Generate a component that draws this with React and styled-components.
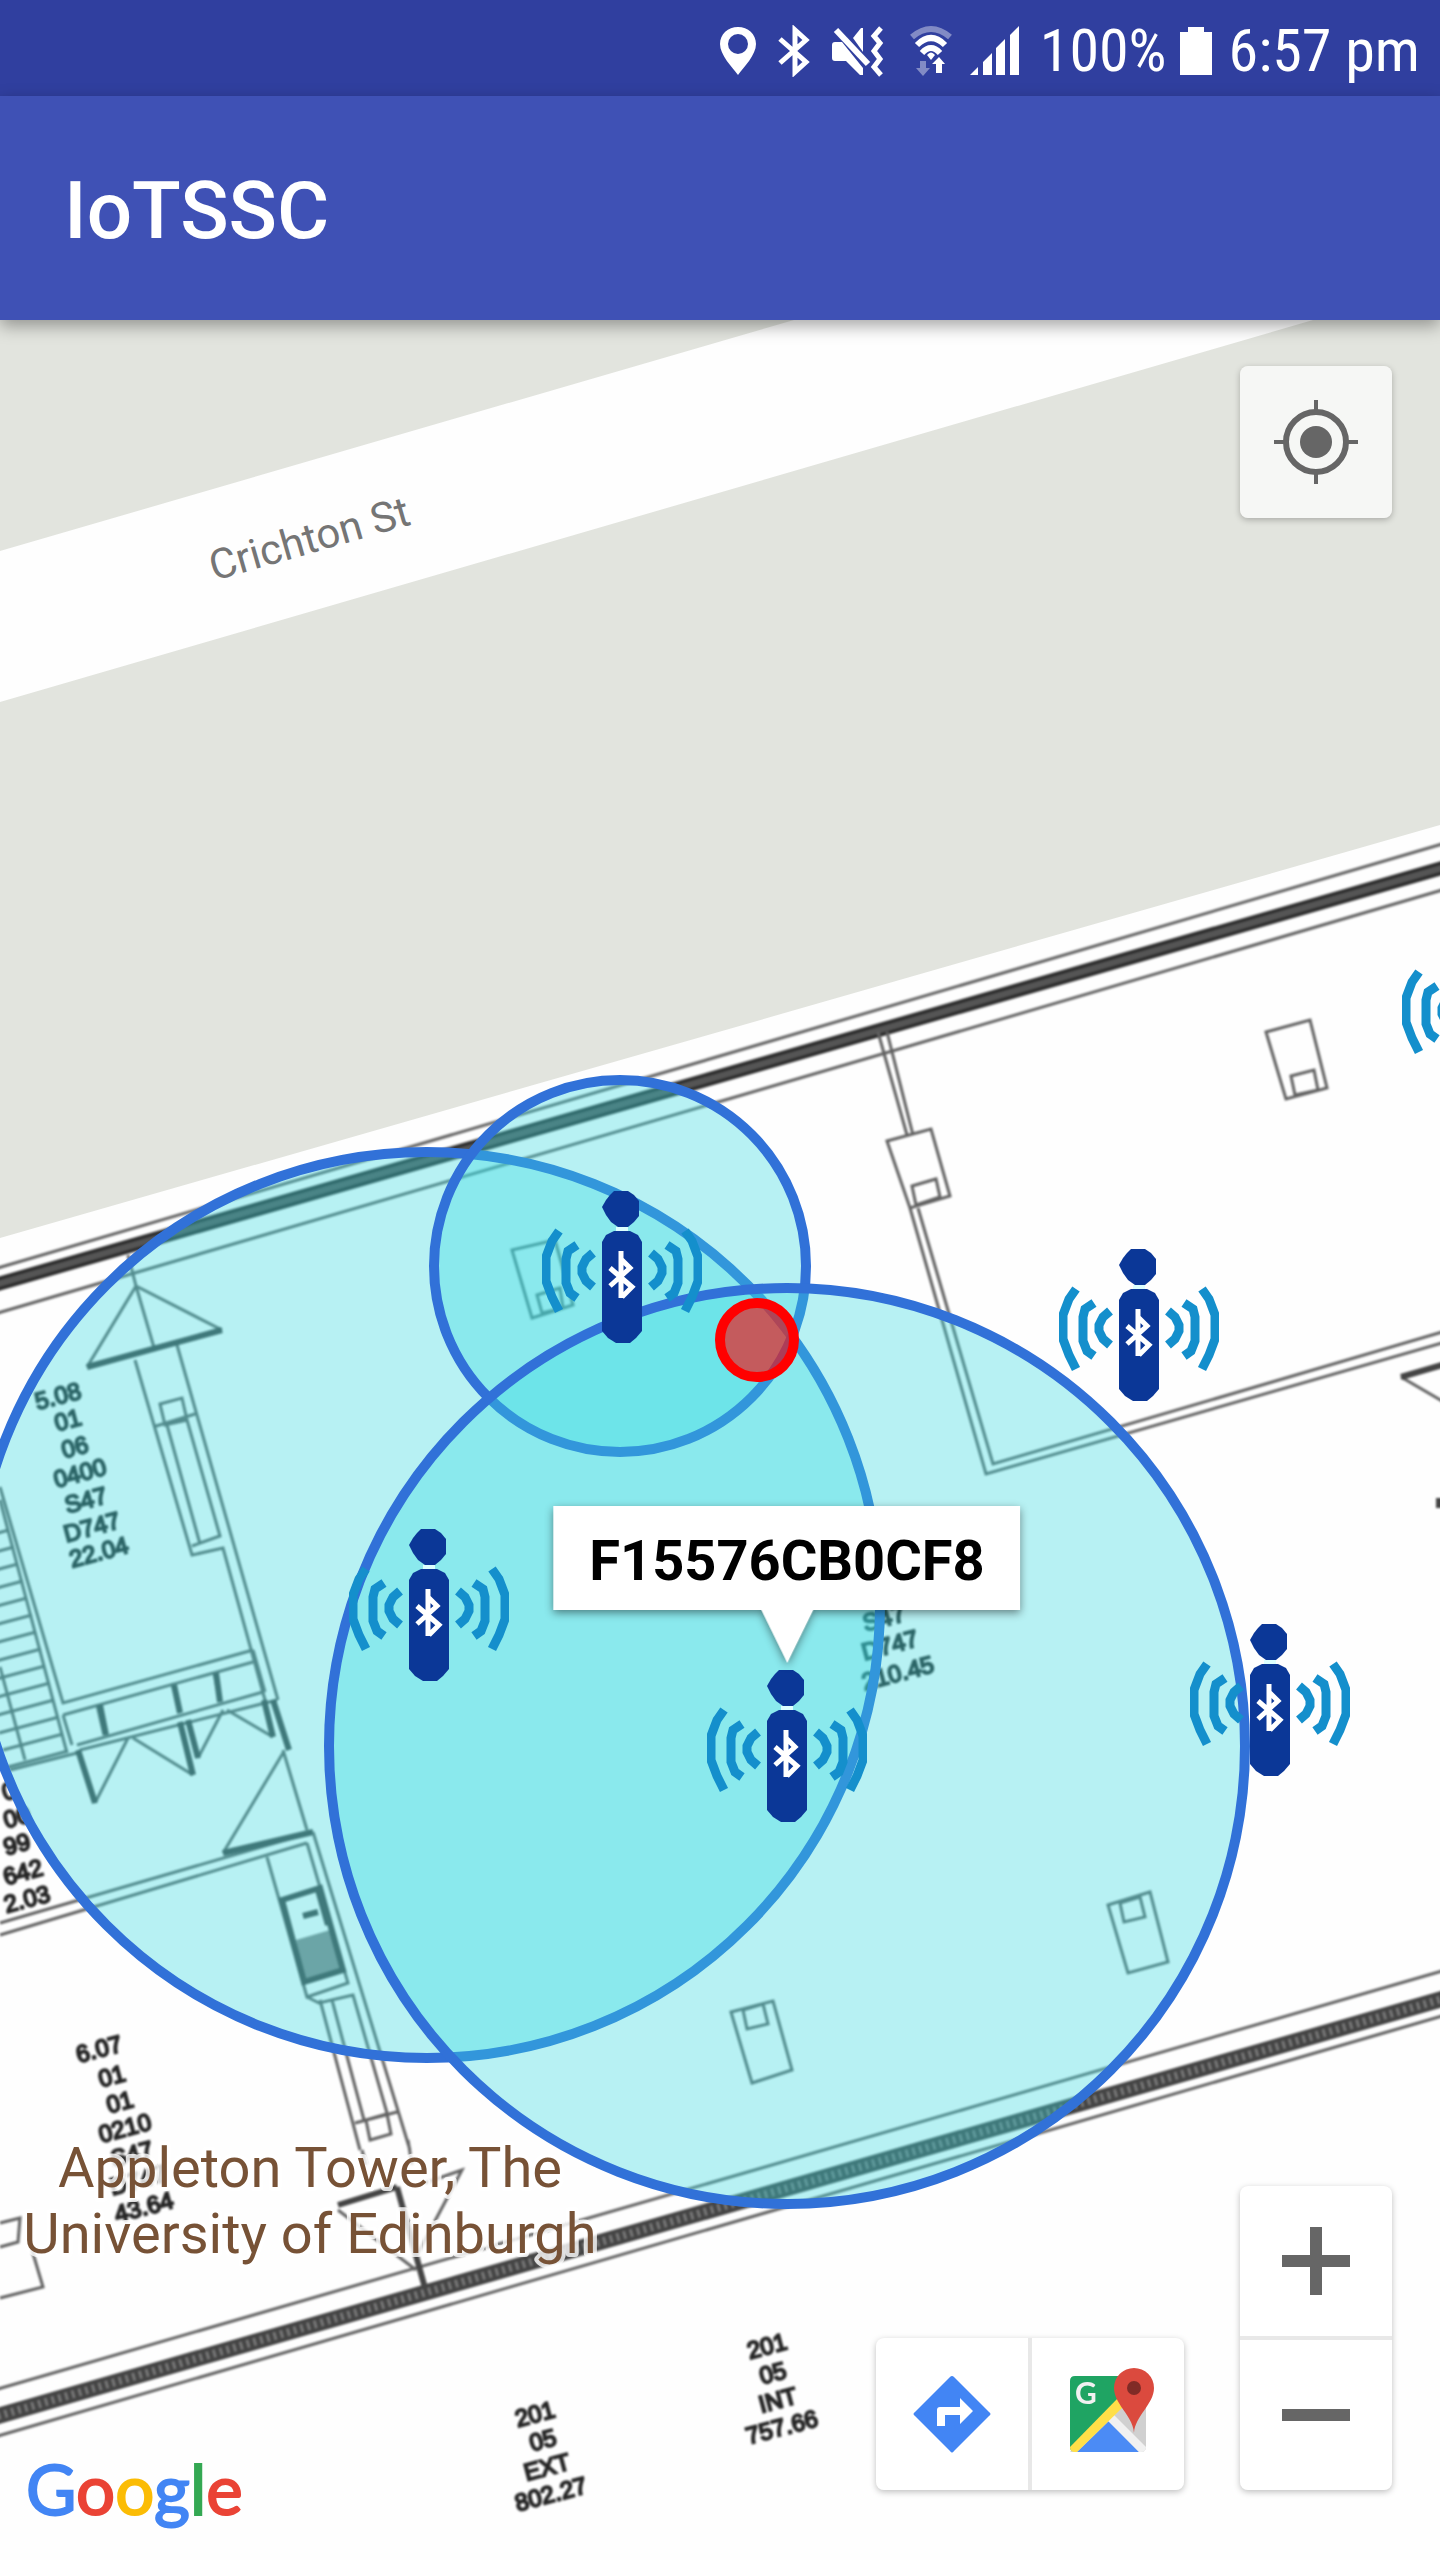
import React from 'react';
import styled, { createGlobalStyle } from 'styled-components';

const GlobalStyle = createGlobalStyle`
  *, *::before, *::after { box-sizing: border-box; }
  body { margin: 0; background: #fefefe; font-family: Roboto, sans-serif; }
  button { border: 0; padding: 0; margin: 0; background: none; font: inherit; cursor: pointer; }
`;

const Screen = styled.div`
  display: flex;
  flex-direction: column;
  min-height: 100vh;
`;

const StatusBar = styled.div`
  display: flex;
  align-items: center;
  justify-content: flex-end;
  height: 96px;
  padding: 6px 20px 0 0;
  background: #303f9f;
  color: #fff;
`;

const StatusIcons = styled.div`
  display: flex;
  align-items: center;
  gap: 22px;
  margin-right: 20px;
`;

const StatusIcon = styled.svg`
  display: block;
  width: ${(p) => p.$w}px;
  height: 52px;
  fill: #fff;
`;

const StatusText = styled.span`
  font: 400 60px/72px 'Roboto Condensed', Roboto, sans-serif;
  white-space: nowrap;
`;

const Battery = styled(StatusIcon)`
  margin: 0 17px 0 13px;
`;

const AppBar = styled.header`
  position: relative;
  z-index: 2;
  display: flex;
  align-items: center;
  height: 224px;
  padding: 6px 64px 0;
  background: #3f51b5;
  box-shadow: 0 6px 16px rgba(0, 0, 0, 0.35);
`;

const Title = styled.h1`
  margin: 0;
  color: #fff;
  font: 500 80px/96px Roboto, sans-serif;
`;

const MapArea = styled.main`
  position: relative;
  flex: 1;
  min-height: 1200px;
  overflow: hidden;
  background: #fefefe;
`;

const Plan = styled.svg`
  position: absolute;
  top: 0;
  left: 0;
  width: 1440px;
  height: 2240px;

  .thin { fill: none; stroke: #626262; stroke-width: 3; }
  .thick { fill: none; stroke: #444; stroke-width: 6; }
`;

const Overlay = styled.g`
  filter: blur(1px);
`;

const PlanText = styled.text`
  font: 400 24px 'Liberation Sans', sans-serif;
  fill: #262626;
  stroke: #262626;
  stroke-width: 2;
  text-anchor: middle;
`;

const StreetText = styled.text`
  font: 400 42px Roboto, sans-serif;
  fill: #757575;
`;

const PlaceText = styled.text`
  font: 400 56px Roboto, sans-serif;
  fill: #775236;
  stroke: #fff;
  stroke-opacity: 0.8;
  stroke-width: 8;
  stroke-linejoin: round;
  paint-order: stroke;
  text-anchor: middle;
`;

const Beacon = styled.button`
  position: absolute;
  left: ${(p) => p.$x}px;
  top: ${(p) => p.$y}px;
  width: 160px;
  height: 152px;

  svg { display: block; width: 160px; height: 152px; }
`;

const InfoWindow = styled.div`
  position: absolute;
  left: 787px;
  top: 1186px;
  display: flex;
  align-items: center;
  height: 104px;
  padding: 6px 36px 0;
  transform: translateX(-50%);
  background: #fff;
  color: #000;
  font: 700 56px/64px Roboto, sans-serif;
  filter: drop-shadow(0 3px 4px rgba(0, 0, 0, 0.45));

  &::after {
    content: '';
    position: absolute;
    top: 100%;
    left: 50%;
    margin-left: -26px;
    border: 26px solid transparent;
    border-top: 53px solid #fff;
    border-bottom: 0;
  }
`;

const TopControls = styled.div`
  position: absolute;
  top: 46px;
  right: 48px;
`;

const BottomControls = styled.div`
  position: absolute;
  right: 48px;
  bottom: 70px;
  display: flex;
  align-items: flex-end;
  gap: 56px;
`;

const ButtonGroup = styled.div`
  display: flex;
  flex-direction: ${(p) => (p.$vertical ? 'column' : 'row')};
  gap: 4px;
  border-radius: 8px;
  background: ${(p) => (p.$glass ? 'rgba(255, 255, 255, 0.7)' : '#e8e8e8')};
  box-shadow: 0 2px 6px rgba(0, 0, 0, 0.25);
  overflow: hidden;
`;

const MapButton = styled.button`
  display: flex;
  align-items: center;
  justify-content: center;
  width: 152px;
  height: ${(p) => p.$h || 152}px;
  background: ${(p) => (p.$glass ? 'transparent' : '#fff')};

  svg { display: block; width: 96px; height: 96px; }
`;

const Logo = styled.a`
  position: absolute;
  left: 26px;
  bottom: 27px;
  font: 400 69px/88px Lato, sans-serif;
  text-decoration: none;
`;

const LogoLetter = styled.span`
  color: ${(p) => p.$color};
  -webkit-text-stroke: 2px ${(p) => p.$color};
`;

const LOGO = [
  ['G', '#4285f4'],
  ['o', '#ea4335'],
  ['o', '#fbbc05'],
  ['g', '#4285f4'],
  ['l', '#34a853'],
  ['e', '#ea4335'],
];

const BEACONS = [
  { id: 'F15576CB0CF1', x: 542, y: 871 },
  { id: 'F15576CB0CF2', x: 349, y: 1209 },
  { id: 'F15576CB0CF8', x: 707, y: 1350 },
  { id: 'F15576CB0CF3', x: 1059, y: 929 },
  { id: 'F15576CB0CF4', x: 1190, y: 1304 },
  { id: 'F15576CB0CF5', x: 1402, y: 612 },
];

const ROOM_LABELS = [
  [60, 1404, '5.08'], [70, 1428, '01'], [77, 1455, '06'], [82, 1481, '0400'],
  [88, 1508, 'S47'], [94, 1535, 'D747'], [101, 1560, '22.04'],
  [101, 2057, '6.07'], [114, 2084, '01'], [122, 2110, '01'], [127, 2136, '0210'],
  [134, 2162, 'S47'], [140, 2188, 'D747'], [146, 2215, '43.64'],
  [537, 2422, '201'], [545, 2448, '05'], [549, 2475, 'EXT'], [553, 2502, '802.27'],
  [769, 2354, '201'], [775, 2381, '05'], [780, 2408, 'INT'], [784, 2435, '757.66'],
  [886, 1626, 'S47'], [892, 1653, 'D747'], [900, 1681, '210.45'],
  [11, 1799, '0'], [19, 1825, '00'], [19, 1852, '99'], [25, 1880, '642'], [29, 1907, '2.03'],
];

const STAIRS = Array.from({ length: 14 }, (_, i) => {
  const y = 1530 + i * 17;
  const x = Math.round((y - 1496) * 0.265);
  return `M${x} ${y}L${x - 60} ${y + 16}`;
}).join('');

function Waves() {
  return (
    <g fill="none" stroke="#148fcc" strokeWidth="9">
      <path d="M17 40L10 50L4 66V90L10 106L17 120" />
      <path d="M35 54L26 60L24 68V92L28 102L35 107" />
      <path d="M51 62L44 68L40 76V82L44 90L51 96" />
    </g>
  );
}

function BeaconIcon() {
  return (
    <svg viewBox="0 0 160 152" aria-hidden="true">
      <Waves />
      <g transform="translate(160 0) scale(-1 1)"><Waves /></g>
      <path d="M72 0H86L92 4L97 10V25L92 31L86 36H76L69 31L64 24L60 16L64 9L68 4Z" fill="#0b3797" />
      <path d="M74 36H86V40H74Z" fill="#dff" />
      <path d="M72 40H88L96 44L100 51V140L94 147L88 152H74L66 147L60 140V51L64 44Z" fill="#0b3797" />
      <path d="M79 60V107M68 77L90 96L80 106M68 95L88 77L79 68" fill="none" stroke="#fff" strokeWidth="5" />
    </svg>
  );
}

function FloorPlan() {
  return (
    <Plan viewBox="0 320 1440 2240" aria-label="Floor plan">
      <path d="M0 320H794L0 551Z" fill="#e2e4de" />
      <path d="M0 702L1313 320H1440V825L0 1238Z" fill="#e2e4de" />

      <Overlay>
        <g className="thin">
          <path d="M-9 1270L1449 842M-9 1315L1449 888" />
          <path d="M-9 2391L1449 1969M-9 2438L1449 2014" />
        </g>
        <path d="M-9 1286L1449 866" stroke="#555" strokeWidth="14" />
        <path d="M-9 1281L1449 861M-9 1291L1449 871" stroke="#2c2c2c" strokeWidth="3" />
        <path d="M-9 2418L1449 1997" stroke="#444" strokeWidth="16" />
        <path d="M-9 2418L1449 1997" stroke="#777" strokeWidth="8" strokeDasharray="3 4" />

        <path
          className="thin"
          d="M128 1255L136 1286L87 1367M136 1286L222 1330M136 1286L155 1351M135 1360L192 1555L223 1548L265 1700M177 1345L278 1700
            M153 1427L195 1414M160 1404L182 1398L187 1420L165 1425ZM167 1425L200 1544M187 1420L220 1536L192 1546"
        />
        <path className="thick" d="M87 1367L222 1330" />
        <path
          className="thin"
          d="M0 1487L63 1703L253 1650M0 1500L67 1753M63 1715L253 1662M63 1715L72 1745M77 1745L263 1692M80 1750L277 1700M0 1667L25 1760M10 1770L77 1753"
        />
        <path className="thin" d={STAIRS} />
        <path
          className="thin"
          d="M97 1705L104 1735M172 1683L180 1713M214 1673L220 1702M253 1650L265 1692M95 1803L128 1738M133 1738L193 1775M198 1758L223 1710M227 1710L273 1737
            M283 1750L307 1830M283 1753L223 1853M0 1923L313 1832M0 1935L307 1843"
        />
        <path className="thick" d="M78 1750L95 1803M180 1722L193 1775M188 1720L198 1758M264 1700L273 1737M273 1700L289 1750M100 1705L106 1735M174 1685L180 1713M216 1673L220 1702M223 1853L313 1832" />
        <path
          className="thin"
          d="M313 1832L410 2150M307 1843L348 1983L307 1997L267 1857M307 1997L319 2003L353 1995L387 2113M320 2000L360 2150M332 2000L364 2120M355 2123L397 2112
            M366 2120L387 2114L391 2134L370 2140ZM362 2150L366 2165M408 2140L412 2165"
        />
        <path d="M296 1940L330 1930L342 1970L304 1982Z" fill="#888" />
        <path className="thick" d="M282 1900L320 1888L343 1970L304 1982ZM318 1890L328 1925M303 1916L318 1912" />
        <path className="thick" d="M338 2205L397 2187M397 2187L425 2288" strokeWidth="5" />
        <path className="thin" d="M425 2183L462 2170L418 2253M338 2210L416 2270M0 2223L20 2218L18 2242L0 2247M32 2250L43 2287L0 2298" />

        <path
          className="thin"
          d="M878 1032L907 1135M887 1032L913 1135M887 1141L931 1129L950 1196L910 1208ZM912 1186L936 1179L940 1197L916 1205Z
            M910 1208L986 1474L1449 1341M918 1208L993 1464L1449 1330
            M1266 1032L1310 1020L1327 1088L1286 1099ZM1291 1076L1314 1070L1318 1090L1295 1095Z
            M1401 1377L1449 1405
            M1108 1905L1150 1892L1168 1962L1128 1973ZM1120 1903L1140 1897L1145 1917L1124 1922Z
            M731 2012L773 2001L792 2070L752 2083ZM743 2010L763 2004L768 2024L747 2029Z
            M512 1250L555 1240L573 1305L532 1318ZM537 1295L560 1288L563 1308L542 1313Z"
        />
        <path className="thick" d="M1401 1377L1449 1363M1439 1498V1508" />

        {ROOM_LABELS.map(([x, y, label], i) => (
          <PlanText key={i} x={x} y={y} transform={`rotate(-15 ${x} ${y})`}>{label}</PlanText>
        ))}
      </Overlay>

      <StreetText x="214" y="581" transform="rotate(-16 214 581)">Crichton St</StreetText>
      <PlaceText x="310" y="2187">Appleton Tower, The</PlaceText>
      <PlaceText x="310" y="2253">University of Edinburgh</PlaceText>

      <g fill="rgba(53, 218, 224, 0.352)" stroke="#3171d8" strokeWidth="10">
        <circle cx="427" cy="1605" r="453" />
        <circle cx="620" cy="1266" r="186" />
        <circle cx="787" cy="1746" r="458" />
      </g>
      <circle cx="757" cy="1340" r="37" fill="rgba(255, 0, 0, 0.6)" stroke="#f00" strokeWidth="10" />
    </Plan>
  );
}

export default function App() {
  return (
    <Screen>
      <GlobalStyle />
      <StatusBar>
        <StatusIcons>
          <StatusIcon $w={36} viewBox="0 0 36 52" aria-label="Location">
            <path fillRule="evenodd" d="M18 2C8 2 0 9 0 19C0 30 12 42 18 50C24 42 36 30 36 19C36 9 28 2 18 2ZM18 9A10 10 0 1 1 18 29A10 10 0 1 1 18 9Z" />
          </StatusIcon>
          <StatusIcon $w={32} viewBox="0 0 32 52" aria-label="Bluetooth">
            <path d="M2 14L28 37L17 47V5L28 15L2 38" fill="none" stroke="#fff" strokeWidth="5" />
          </StatusIcon>
          <StatusIcon $w={52} viewBox="0 0 52 52" aria-label="Vibrate">
            <path d="M0 20Q0 17 3 17H10L31 43V50H28L14 36H3Q0 36 0 33Z" />
            <path d="M21 13L29 3H31V27Z" />
            <path d="M4 5L36 39" stroke="#fff" strokeWidth="6" />
            <path d="M49 3L42 11L48 18L42 26L48 34L42 42L49 50" fill="none" stroke="#fff" strokeWidth="5" />
          </StatusIcon>
          <StatusIcon $w={42} viewBox="-4 0 42 52" overflow="visible" aria-label="Wi-Fi">
            <g fill="none" stroke="#fff" strokeWidth="6">
              <path d="M2 12Q21 -4 40 12" opacity="0.4" />
              <path d="M7 20Q21 6 35 20" />
              <path d="M12 28Q21 18 30 28" />
            </g>
            <path d="M21 35L17 30Q21 25 25 30Z" />
            <path d="M10 36H16V43H20L13 51L6 43H10Z" opacity="0.4" />
            <path d="M26 48H32V39H35L29 32L22 39H26Z" />
          </StatusIcon>
          <StatusIcon $w={50} viewBox="0 0 50 52" aria-label="Signal">
            <path d="M0 50L8 42V50ZM13 37L22 28V50H13ZM26 23L35 14V50H26ZM40 10L49 1V50H40Z" />
          </StatusIcon>
        </StatusIcons>
        <StatusText>100%</StatusText>
        <Battery $w={32} viewBox="0 0 32 52" aria-label="Battery full">
          <path d="M8 2H24V7H32V50H0V7H8Z" />
        </Battery>
        <StatusText>6:57 pm</StatusText>
      </StatusBar>

      <AppBar><Title>IoTSSC</Title></AppBar>

      <MapArea>
        <FloorPlan />
        {BEACONS.map((b) => (
          <Beacon key={b.id} $x={b.x} $y={b.y} aria-label={`Beacon ${b.id}`}><BeaconIcon /></Beacon>
        ))}
        <InfoWindow>F15576CB0CF8</InfoWindow>

        <TopControls>
          <ButtonGroup $glass>
            <MapButton $glass aria-label="My location">
              <svg viewBox="0 0 96 96">
                <circle cx="48" cy="48" r="30" fill="none" stroke="#666" strokeWidth="6" />
                <circle cx="48" cy="48" r="16" fill="#666" />
                <path d="M48 6V18M48 78V90M6 48H18M78 48H90" stroke="#666" strokeWidth="4" />
              </svg>
            </MapButton>
          </ButtonGroup>
        </TopControls>

        <BottomControls>
          <ButtonGroup>
            <MapButton aria-label="Directions">
              <svg viewBox="0 0 96 96">
                <path d="M46 11Q48 9 50 11L85 46Q88 48 85 50L50 85Q48 88 46 85L11 50Q8 48 11 46Z" fill="#4285f4" />
                <path d="M33 60V44Q33 41 36 41H56V32L69 45L56 58V49H41V60Z" fill="#fff" />
              </svg>
            </MapButton>
            <MapButton aria-label="Open in Google Maps">
              <svg viewBox="0 0 96 96">
                <path d="M15 10H86V81Q86 86 81 86H15Q10 86 10 81V15Q10 10 15 10Z" fill="#1fa463" />
                <path d="M60 10H90V2H96V96H86V86H60Z" fill="#fff" />
                <path d="M10 86L60 36L86 40V81Q86 86 81 86Z" fill="#d0d0d0" />
                <path d="M17 86L49 55L79 86Z" fill="#4b8bf5" />
                <path d="M48 55L54 49L86 81Q86 86 81 86H79Z" fill="#f1f1f1" />
                <path d="M10 81L58 32L66 38L17 86H15Q10 86 10 81Z" fill="#ffdf48" />
                <path d="M74 67C73 50 54 38 54 22A20 20 0 0 1 94 22C94 38 75 50 74 67Z" fill="#db4a3e" />
                <circle cx="74" cy="22" r="7" fill="#802b26" />
                <text x="15" y="38" fill="#f1f1f1" fontFamily="Lato, sans-serif" fontWeight="700" fontSize="30">G</text>
              </svg>
            </MapButton>
          </ButtonGroup>
          <ButtonGroup $vertical>
            <MapButton $h={150} aria-label="Zoom in">
              <svg viewBox="0 0 96 96"><path d="M14 48H82M48 14V82" stroke="#666" strokeWidth="12" /></svg>
            </MapButton>
            <MapButton $h={150} aria-label="Zoom out">
              <svg viewBox="0 0 96 96"><path d="M14 48H82" stroke="#666" strokeWidth="12" /></svg>
            </MapButton>
          </ButtonGroup>
        </BottomControls>

        <Logo href="#google" aria-label="Google">
          {LOGO.map(([letter, color], i) => (
            <LogoLetter key={i} $color={color}>{letter}</LogoLetter>
          ))}
        </Logo>
      </MapArea>
    </Screen>
  );
}
